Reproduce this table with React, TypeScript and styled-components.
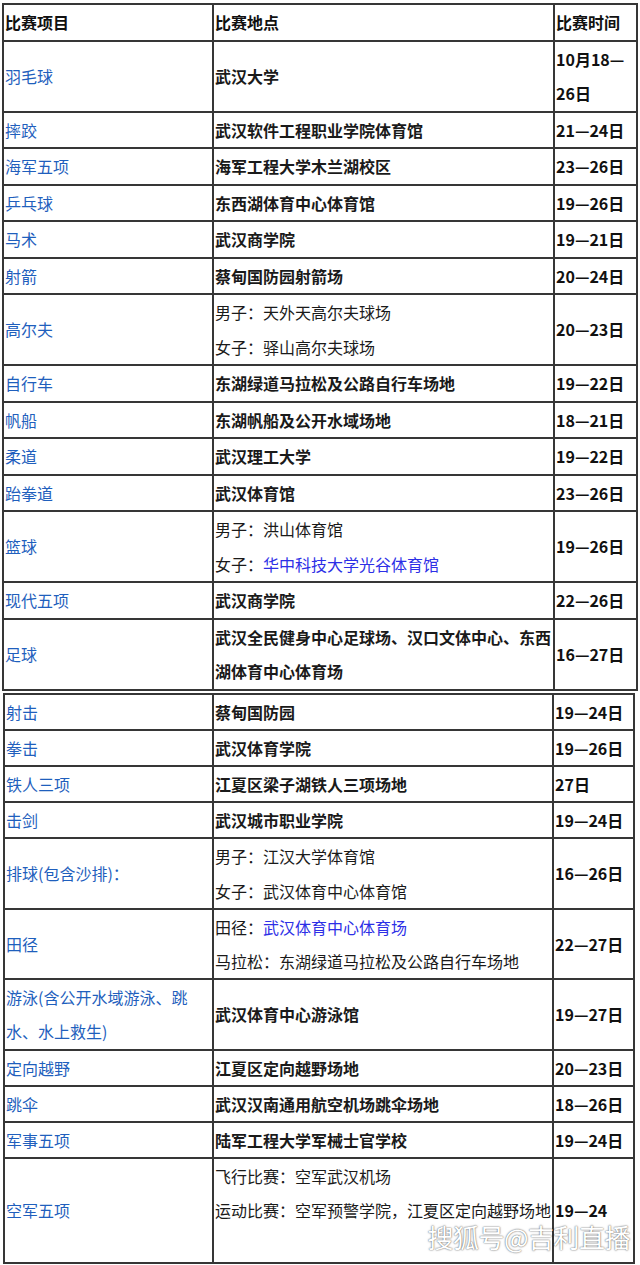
import React from "react";
import styled, { createGlobalStyle } from "styled-components";

const GlobalStyle = createGlobalStyle`
  html, body {
    margin: 0;
    padding: 0;
    background: #fff;
  }
  body {
    font-family: "Noto Sans CJK SC", "Liberation Sans", sans-serif;
  }
`;

const Page = styled.div`
  position: relative;
  width: 640px;
  height: 1265px;
  padding-top: 3px;
  box-sizing: border-box;
  background: #fff;
  overflow: hidden;
`;

const Table = styled.table<{ $offset: number; $width: number; $gap?: number; $line: number }>`
  border-collapse: collapse;
  table-layout: fixed;
  width: ${(p) => p.$width}px;
  margin: ${(p) => p.$gap || 0}px 0 0 ${(p) => p.$offset}px;
  font-size: 16px;
  line-height: ${(p) => p.$line}px;
  color: #111;
  th,
  td {
    border: 2px solid #363636;
    padding: 0 0 0 1px;
    vertical-align: middle;
    text-align: left;
    white-space: nowrap;
  }
`;

const HeadCell = styled.th`
  font-weight: 700;
  color: #111;
`;

const SportCell = styled.td`
  color: #1f5fbd;
  font-weight: 400;
`;

const VenueCell = styled.td<{ $bold?: boolean }>`
  font-weight: ${(p) => (p.$bold ? 700 : 400)};
  color: #1a1a1a;
`;

const VenueLine = styled.div`
  min-height: 1lh;
`;

const Link = styled.span`
  color: #2d2fe6;
`;

const DateCell = styled.td`
  font-weight: 700;
  color: #111;
`;

const Watermark = styled.div`
  position: absolute;
  right: 10px;
  bottom: 15px;
  font-size: 26px;
  line-height: 1;
  color: #fff;
  letter-spacing: -0.5px;
  text-shadow: 0 0 2px rgba(0, 0, 0, 0.55), 0 0 1px rgba(0, 0, 0, 0.4);
`;

type Row = {
  sport: React.ReactNode;
  venue: React.ReactNode[];
  bold?: boolean;
  date: React.ReactNode;
};

const first: Row[] = [
  { sport: "羽毛球", venue: ["武汉大学"], bold: true, date: <>10月18—<br />26日</> },
  { sport: "摔跤", venue: ["武汉软件工程职业学院体育馆"], bold: true, date: "21—24日" },
  { sport: "海军五项", venue: ["海军工程大学木兰湖校区"], bold: true, date: "23—26日" },
  { sport: "乒乓球", venue: ["东西湖体育中心体育馆"], bold: true, date: "19—26日" },
  { sport: "马术", venue: ["武汉商学院"], bold: true, date: "19—21日" },
  { sport: "射箭", venue: ["蔡甸国防园射箭场"], bold: true, date: "20—24日" },
  { sport: "高尔夫", venue: ["男子：天外天高尔夫球场", "女子：驿山高尔夫球场"], date: "20—23日" },
  { sport: "自行车", venue: ["东湖绿道马拉松及公路自行车场地"], bold: true, date: "19—22日" },
  { sport: "帆船", venue: ["东湖帆船及公开水域场地"], bold: true, date: "18—21日" },
  { sport: "柔道", venue: ["武汉理工大学"], bold: true, date: "19—22日" },
  { sport: "跆拳道", venue: ["武汉体育馆"], bold: true, date: "23—26日" },
  {
    sport: "篮球",
    venue: ["男子：洪山体育馆", <>女子：<Link>华中科技大学光谷体育馆</Link></>],
    date: "19—26日",
  },
  { sport: "现代五项", venue: ["武汉商学院"], bold: true, date: "22—26日" },
  {
    sport: "足球",
    venue: ["武汉全民健身中心足球场、汉口文体中心、东西", "湖体育中心体育场"],
    bold: true,
    date: "16—27日",
  },
];

const second: Row[] = [
  { sport: "射击", venue: ["蔡甸国防园"], bold: true, date: "19—24日" },
  { sport: "拳击", venue: ["武汉体育学院"], bold: true, date: "19—26日" },
  { sport: "铁人三项", venue: ["江夏区梁子湖铁人三项场地"], bold: true, date: "27日" },
  { sport: "击剑", venue: ["武汉城市职业学院"], bold: true, date: "19—24日" },
  { sport: "排球(包含沙排)：", venue: ["男子：江汉大学体育馆", "女子：武汉体育中心体育馆"], date: "16—26日" },
  {
    sport: "田径",
    venue: [<>田径：<Link>武汉体育中心体育场</Link></>, "马拉松：东湖绿道马拉松及公路自行车场地"],
    date: "22—27日",
  },
  {
    sport: <>游泳(含公开水域游泳、跳<br />水、水上救生)</>,
    venue: ["武汉体育中心游泳馆"],
    bold: true,
    date: "19—27日",
  },
  { sport: "定向越野", venue: ["江夏区定向越野场地"], bold: true, date: "20—23日" },
  { sport: "跳伞", venue: ["武汉汉南通用航空机场跳伞场地"], bold: true, date: "18—26日" },
  { sport: "军事五项", venue: ["陆军工程大学军械士官学校"], bold: true, date: "19—24日" },
  {
    sport: "空军五项",
    venue: ["飞行比赛：空军武汉机场", "运动比赛：空军预警学院，江夏区定向越野场地", ""],
    date: "19—24",
  },
];

const Rows = ({ rows }: { rows: Row[] }) => (
  <>
    {rows.map((r, i) => (
      <tr key={i}>
        <SportCell>{r.sport}</SportCell>
        <VenueCell $bold={r.bold}>
          {r.venue.map((v, j) => (
            <VenueLine key={j}>{v}</VenueLine>
          ))}
        </VenueCell>
        <DateCell>{r.date}</DateCell>
      </tr>
    ))}
  </>
);

export default function App() {
  return (
    <Page>
      <GlobalStyle />
      <Table $offset={2} $width={636} $line={34.5}>
        <colgroup>
          <col style={{ width: 210 }} />
          <col style={{ width: 341 }} />
          <col />
        </colgroup>
        <tbody>
          <tr>
            <HeadCell>比赛项目</HeadCell>
            <HeadCell>比赛地点</HeadCell>
            <HeadCell>比赛时间</HeadCell>
          </tr>
          <Rows rows={first} />
        </tbody>
      </Table>
      <Table $offset={3} $width={632} $gap={2} $line={34.2}>
        <colgroup>
          <col style={{ width: 209 }} />
          <col style={{ width: 340 }} />
          <col />
        </colgroup>
        <tbody>
          <Rows rows={second} />
        </tbody>
      </Table>
      <Watermark>搜狐号@吉利直播</Watermark>
    </Page>
  );
}
